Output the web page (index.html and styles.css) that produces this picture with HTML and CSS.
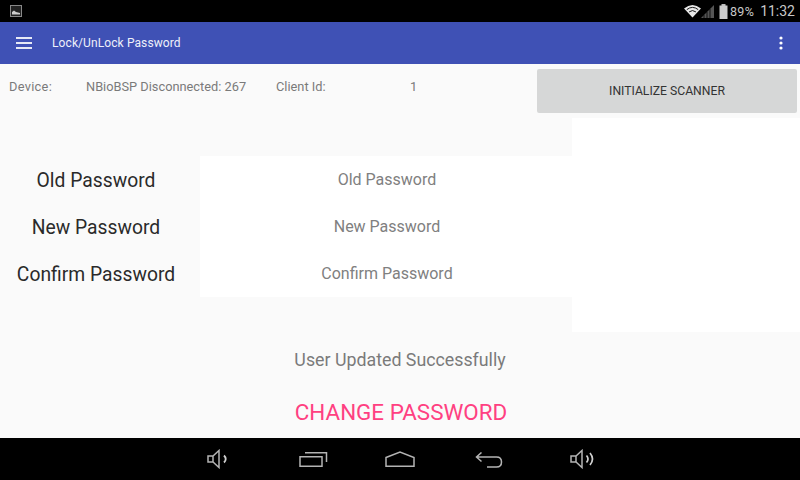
FILE: index.html
```html
<!DOCTYPE html>
<html lang="en">
<head>
<meta charset="utf-8">
<title>Lock/UnLock Password</title>
<link rel="stylesheet" href="styles.css">
</head>
<body>
<div class="screen">
  <header class="status">
    <svg class="notif" width="12" height="12" viewBox="0 0 12 12"><rect x="0.5" y="0.5" width="11" height="11" fill="#222" stroke="#888"/><path d="M2 9.5 L2 7 L4 5.5 L6 7 L8 7.5 L10 8 L10 9.5Z" fill="#ccc"/></svg>
    <div class="status-right">
      <svg width="20" height="14" viewBox="-2.5 0 20 14"><path d="M0.500 4.500 Q9 -2.500 17.500 4.500 L9 13.500Z" fill="#e8e8e8"/><path d="M3.300 5.600 Q9 1.200 14.700 5.600" fill="none" stroke="#000" stroke-width="0.9"/><path d="M5.600 7.900 Q9 5.200 12.400 7.900" fill="none" stroke="#000" stroke-width="0.9"/></svg>
      <svg width="13" height="14" viewBox="0 0 13 14"><path d="M0 14 L13 1 L13 14Z" fill="#555"/><path d="M3 14V11M6 14V8M9 14V5" stroke="#000" stroke-width="0.8"/></svg>
      <svg class="batt" width="9" height="15" viewBox="0 0 9 15"><rect x="2.500" y="0" width="4" height="2" fill="#bbb"/><rect x="0.500" y="1.500" width="8" height="13.500" fill="#ccc"/></svg>
      <span class="pct">89%</span>
      <span class="clock">11:32</span>
    </div>
  </header>
  <nav class="appbar">
    <svg class="menu" width="16" height="12" viewBox="0 0 16 12"><path d="M0 1H16M0 6H16M0 11H16" stroke="#e6e9f6" stroke-width="2"/></svg>
    <span class="title">Lock/UnLock Password</span>
    <svg class="more" width="4" height="14" viewBox="0 0 4 14"><circle cx="2" cy="2" r="1.6" fill="#fff"/><circle cx="2" cy="7" r="1.6" fill="#fff"/><circle cx="2" cy="12" r="1.6" fill="#fff"/></svg>
  </nav>
  <main class="content">
    <section class="info">
      <span class="info-device">Device:</span>
      <span class="info-status">NBioBSP Disconnected: 267</span>
      <span class="info-client">Client Id:</span>
      <span class="info-id">1</span>
      <button class="scan">INITIALIZE SCANNER</button>
    </section>
    <section class="middle">
      <div class="form">
        <div class="labels">
          <div class="label">Old Password</div>
          <div class="label">New Password</div>
          <div class="label">Confirm Password</div>
        </div>
        <div class="fields">
          <div class="field">Old Password</div>
          <div class="field">New Password</div>
          <div class="field">Confirm Password</div>
        </div>
      </div>
      <div class="panel"></div>
    </section>
    <p class="message">User Updated Successfully</p>
    <button class="change">CHANGE PASSWORD</button>
  </main>
  <footer class="navbar">
    <svg width="22" height="20" viewBox="0 0 22 20" class="nav-vol-down"><path d="M1 7H6L12 1.500V18.500L6 13H1Z M6 7V13" fill="none" stroke="#b4b4b4" stroke-width="1.500"/><path d="M17 6.500Q20.500 10 17 13.500" fill="none" stroke="#d0d0d0" stroke-width="1.800"/></svg>
    <svg width="30" height="16" viewBox="0 0 30 16" class="nav-recent"><rect x="2" y="5.750" width="22" height="9.500" fill="none" stroke="#b4b4b4" stroke-width="1.500"/><path d="M7 1.750H28.500V11" fill="none" stroke="#b4b4b4" stroke-width="1.500"/></svg>
    <svg width="30" height="16" viewBox="0 0 30 16" class="nav-home"><path d="M1 6.500 L15 1 L29 6.500 V15.250 H1Z" fill="none" stroke="#b4b4b4" stroke-width="1.500"/></svg>
    <svg width="28" height="16" viewBox="0 0 28 16" class="nav-back"><path d="M6.500 0.500 L1.500 5 L6.500 9.500 M1.500 5H21.500Q26.500 5 26.500 10T21.500 15H12" fill="none" stroke="#b4b4b4" stroke-width="1.500"/></svg>
    <svg width="26" height="20" viewBox="0 0 26 20" class="nav-vol-up"><path d="M1 7H6L12 1.500V18.500L6 13H1Z M6 7V13" fill="none" stroke="#b4b4b4" stroke-width="1.500"/><path d="M16.500 6.500Q19.500 10 16.500 13.500M20 4Q25 10 20 16" fill="none" stroke="#d0d0d0" stroke-width="1.700"/></svg>
  </footer>
</div>
</body>
</html>
```
FILE: styles.css
```css
* { box-sizing: border-box; }
html, body { margin: 0; padding: 0; }
body { width: 800px; height: 480px; overflow: hidden; font-family: Roboto, "Liberation Sans", sans-serif; background: #fafafa; }
.screen { width: 800px; height: 480px; display: flex; flex-direction: column; }

.status { height: 22px; background: #000; display: flex; align-items: center; justify-content: space-between; padding: 0 5px 0 10px; flex: none; }
.status-right { display: flex; align-items: center; color: #c8c8c8; }
.batt { margin-left: 5px; }
.pct { font-size: 12.500px; margin-left: 2px; letter-spacing: 0.3px; }
.clock { font-size: 14px; margin-left: 6px; }

.appbar { height: 42px; flex: none; background: #3f51b5; display: flex; align-items: center; padding: 0 17px 0 16px; color: #eef0fa; }
.title { font-size: 12px; margin-left: 20px; letter-spacing: 0.1px; flex: 1; }

.content { flex: 1; display: flex; flex-direction: column; background: #fafafa; min-height: 0; }

.info { height: 54px; flex: none; display: flex; align-items: flex-start; font-size: 12.800px; color: #7a7a7a; }
.info span { margin-top: 15px; line-height: 16px; }
.info-device { width: 77px; margin-left: 9px; letter-spacing: 0.3px; }
.info-status { width: 190px; }
.info-client { width: 134px; }
.info-id { width: 127px; }
.scan { width: 260px; height: 44px; margin-top: 5px; border: 0; border-radius: 2px; background: #d6d7d7; color: #333; font: 12.200px Roboto, "Liberation Sans", sans-serif; padding: 0; }

.middle { height: 214px; flex: none; display: flex; }
.form { width: 572px; padding-top: 38px; display: flex; align-items: flex-start; }
.labels { width: 200px; }
.label { height: 47px; display: flex; align-items: center; justify-content: center; font-size: 19.300px; color: #2a2a2a; padding-top: 2px; padding-right: 8px; }
.fields { width: 372px; background: #fff; height: 141px; }
.field { height: 47px; display: flex; align-items: center; justify-content: center; font-size: 16px; color: #808080; padding-left: 2px; }
.panel { flex: 1; background: #fff; }

.message { margin: 16px 0 0; height: 24px; line-height: 24px; text-align: center; font-size: 17.800px; color: #7a7a7a; }
.change { margin: 25px auto 0; background: none; border: 0; padding: 0 0 0 2px; height: 30px; font: 22.400px Roboto, "Liberation Sans", sans-serif; color: #ff4081; }

.navbar { height: 42px; flex: none; background: #000; display: flex; align-items: center; padding-left: 207px; }
.nav-recent { margin-left: 69px; }
.nav-home { margin-left: 57px; margin-top: -1px; }
.nav-back { margin-left: 60px; margin-top: 1px; }
.nav-vol-up { margin-left: 67px; }
```
